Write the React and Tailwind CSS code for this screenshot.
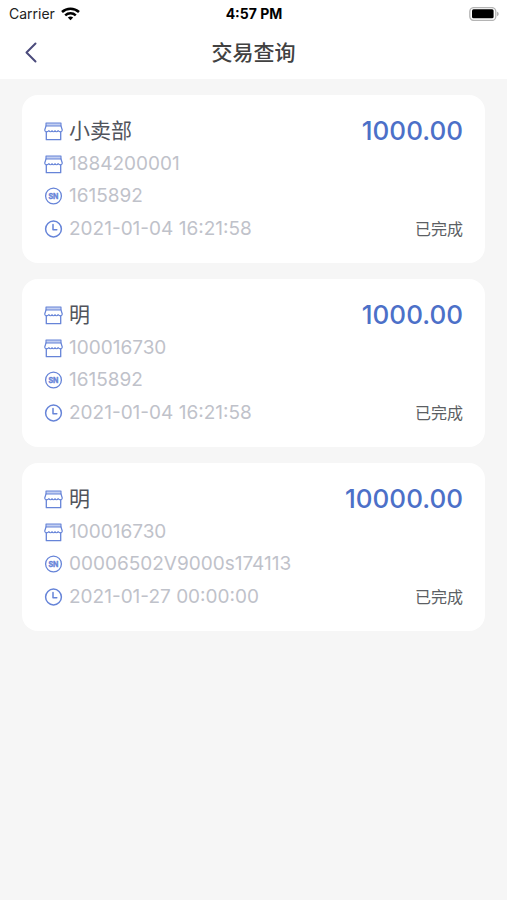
import React from "react";

const transactions = [
  { id: 1, store: "小卖部", number: "1884200001", sn: "1615892", time: "2021-01-04 16:21:58", amount: "1000.00", status: "已完成" },
  { id: 2, store: "明", number: "100016730", sn: "1615892", time: "2021-01-04 16:21:58", amount: "1000.00", status: "已完成" },
  { id: 3, store: "明", number: "100016730", sn: "00006502V9000s174113", time: "2021-01-27 00:00:00", amount: "10000.00", status: "已完成" },
];

function Icon({ children }) {
  return (
    <svg className="size-[19px] shrink-0" viewBox="0 0 19 19" fill="none" stroke="#6684d8" strokeWidth="1.3" strokeLinecap="round" strokeLinejoin="round" aria-hidden="true">
      {children}
    </svg>
  );
}

function StoreIcon() {
  return (
    <Icon>
      <path d="M2 1h15v3H2z" fill="#c3cff1" strokeWidth="1.1" />
      <path d="M2 4L.8 7.800C.7 9 1.400 9.800 2.300 9.800S4.200 9.600 5 8.600c.5 1.500 2.500 1.500 3 0 .5 1.500 2.500 1.500 3 0 .5 1.500 2.500 1.500 3 0 .8 1 1.800 1.200 2.700 1.200S18.300 9 18.200 7.800L17 4" strokeWidth="1.2" />
      <path d="M2.300 10v7.700h14.400V10" />
    </Icon>
  );
}

function SnIcon() {
  return (
    <Icon>
      <circle cx="9.500" cy="9" r="7.900" />
      <text x="9.500" y="11.500" textAnchor="middle" fill="#6684d8" stroke="#6684d8" strokeWidth="0.400" className="font-['Inter',sans-serif] text-[7px] font-bold">SN</text>
    </Icon>
  );
}

function ClockIcon() {
  return (
    <Icon>
      <circle cx="9.500" cy="9" r="7.900" strokeWidth="1.500" />
      <path d="M9 4.500v5.300h3.800" strokeWidth="1.500" />
    </Icon>
  );
}

function Detail({ icon, children }) {
  return (
    <div className="flex h-8 items-center gap-1.5">
      {icon}
      <span className="text-[19px] leading-6 text-[#bfc2ca]">{children}</span>
    </div>
  );
}

function TransactionCard({ item }) {
  return (
    <li className="rounded-2xl bg-white px-[22px] pt-[19px] pb-[17px]">
      <div className="flex h-[34px] items-center justify-between">
        <div className="flex items-center gap-1.5">
          <StoreIcon />
          <h2 className="text-[21px] leading-8 text-[#51545c]">{item.store}</h2>
        </div>
        <span className="text-[26px] leading-8 font-medium text-[#4c70c8]">{item.amount}</span>
      </div>
      <Detail icon={<StoreIcon />}>{item.number}</Detail>
      <Detail icon={<SnIcon />}>{item.sn}</Detail>
      <div className="flex h-[34px] items-center justify-between">
        <Detail icon={<ClockIcon />}>{item.time}</Detail>
        <span className="text-[16px] leading-6 text-[#5c5f64]">{item.status}</span>
      </div>
    </li>
  );
}

function StatusBar() {
  return (
    <div className="grid h-[27px] grid-cols-3 items-center pr-2 pl-[9px] text-black">
      <div className="flex items-center gap-1.5">
        <span className="text-[14px] leading-5 text-[#222222]">Carrier</span>
        <svg className="h-[14px] w-[19px]" viewBox="0 0 19 14" fill="none" stroke="#000" strokeWidth="2.500" aria-hidden="true">
          <path d="M1 5c4.800-4.500 12.200-4.500 17 0" />
          <path d="M4.200 8.300c3-2.800 7.600-2.800 10.600 0" />
          <path d="M6.800 10.500c1.600-1.300 3.800-1.300 5.400 0L9.500 13.300z" fill="#000" stroke="none" />
        </svg>
      </div>
      <span className="text-center text-[14px] leading-5 font-bold">4:57 PM</span>
      <svg className="h-[14px] w-[30px] justify-self-end" viewBox="0 0 30 14" aria-hidden="true">
        <rect x="0.800" y="0.600" width="26" height="12.800" rx="4" fill="#fff" stroke="#b4b4b4" strokeWidth="1.300" />
        <rect x="3" y="2.200" width="21.600" height="9" rx="1.500" fill="#000" />
        <path d="M28.100 4.800c2 .6 2 3.800 0 4.400z" fill="#aaa" />
      </svg>
    </div>
  );
}

export default function App() {
  return (
    <div className="min-h-screen bg-[#f6f6f6] font-['Inter','Noto_Sans_CJK_SC',sans-serif]">
      <header className="bg-white">
        <StatusBar />
        <nav className="grid h-[52px] grid-cols-[1fr_auto_1fr] items-center px-[22px]">
          <button type="button" aria-label="返回" className="flex h-6 w-[18px] items-center justify-center">
            <svg className="h-[22px] w-[14px]" viewBox="0 0 14 22" fill="none" stroke="#4b4b7c" strokeWidth="2" strokeLinecap="round" strokeLinejoin="round" aria-hidden="true">
              <path d="M11.500 1.500L2.500 10.500l9 9" />
            </svg>
          </button>
          <h1 className="text-[21px] leading-8 font-medium text-[#414141]">交易查询</h1>
        </nav>
      </header>
      <main className="px-[22px] py-4">
        <ul className="flex flex-col gap-4">
          {transactions.map((item) => (
            <TransactionCard key={item.id} item={item} />
          ))}
        </ul>
      </main>
    </div>
  );
}
